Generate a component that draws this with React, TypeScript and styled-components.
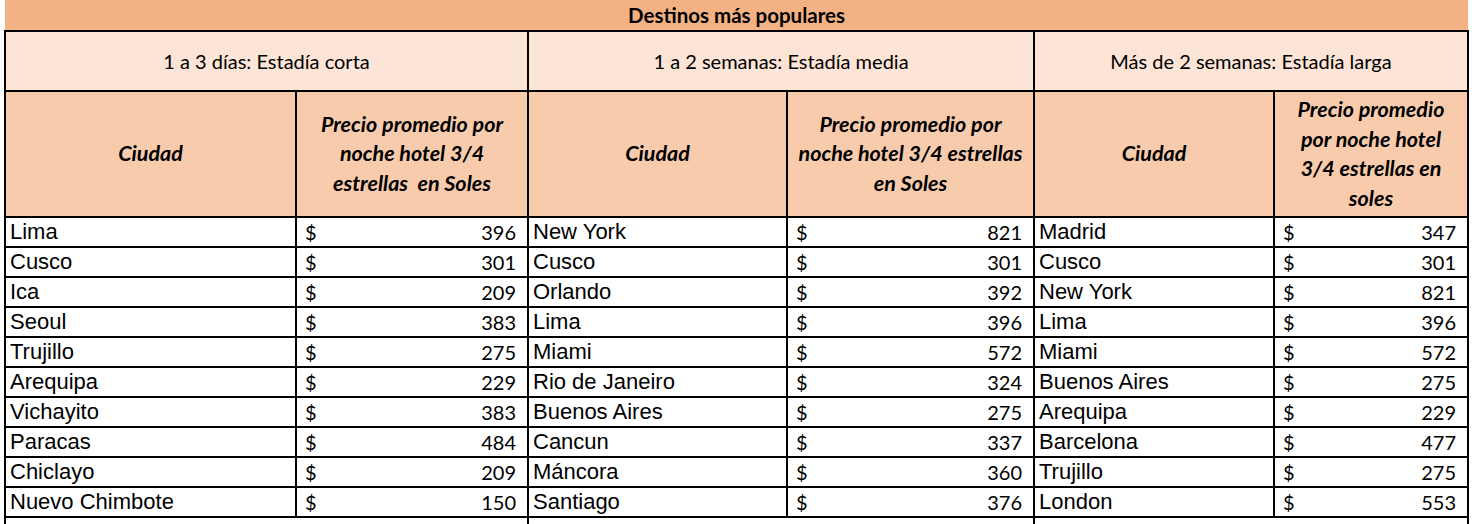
import React from "react";
import styled, { createGlobalStyle } from "styled-components";

const GlobalStyle = createGlobalStyle`
  html, body {
    margin: 0;
    padding: 0;
    background: #ffffff;
  }
`;

const Page = styled.div`
  padding-left: 4px;
  width: 1472px;
  height: 524px;
  overflow: hidden;
  box-sizing: border-box;
`;

const Sheet = styled.table`
  border-collapse: collapse;
  table-layout: fixed;
  width: 1463px;
  color: #000000;
`;

const TitleCell = styled.td`
  height: 30px;
  padding: 0;
  background-color: #f4b183;
  text-align: center;
  font-family: "Lato", "Liberation Sans", sans-serif;
  font-weight: 700;
  font-size: 20.5px;
  border: none;
  border-bottom: 2px solid #000000;
`;

const GroupCell = styled.td`
  height: 58px;
  padding: 0;
  background-color: #fce4d6;
  text-align: center;
  font-family: "Lato", "Liberation Sans", sans-serif;
  font-size: 20px;
  border: 2px solid #000000;
`;

const HeadCell = styled.td`
  height: 124px;
  padding: 0;
  background-color: #f8cbad;
  text-align: center;
  vertical-align: middle;
  font-family: "Lato", "Liberation Sans", sans-serif;
  font-weight: 700;
  font-style: italic;
  font-size: 21.5px;
  line-height: 29.5px;
  white-space: nowrap;
  border: 2px solid #000000;
`;

const CityCell = styled.td`
  height: 28px;
  padding: 0 0 0 4px;
  background-color: #ffffff;
  font-family: "Liberation Sans", Arial, sans-serif;
  font-size: 22px;
  white-space: nowrap;
  border: 2px solid #000000;
`;

const PriceCell = styled.td`
  height: 28px;
  padding: 0 11px 0 8px;
  background-color: #ffffff;
  font-family: "Lato", "Liberation Sans", sans-serif;
  font-size: 20px;
  border: 2px solid #000000;
`;

const PriceBox = styled.div`
  display: flex;
  justify-content: space-between;
  align-items: center;
`;

const TailCell = styled.td`
  height: 20px;
  padding: 0;
  border-left: 2px solid #000000;
  border-right: 2px solid #000000;
  border-top: 2px solid #000000;
`;

type Row = [string, number, string, number, string, number];

const rows: Row[] = [
  ["Lima", 396, "New York", 821, "Madrid", 347],
  ["Cusco", 301, "Cusco", 301, "Cusco", 301],
  ["Ica", 209, "Orlando", 392, "New York", 821],
  ["Seoul", 383, "Lima", 396, "Lima", 396],
  ["Trujillo", 275, "Miami", 572, "Miami", 572],
  ["Arequipa", 229, "Rio de Janeiro", 324, "Buenos Aires", 275],
  ["Vichayito", 383, "Buenos Aires", 275, "Arequipa", 229],
  ["Paracas", 484, "Cancun", 337, "Barcelona", 477],
  ["Chiclayo", 209, "Máncora", 360, "Trujillo", 275],
  ["Nuevo Chimbote", 150, "Santiago", 376, "London", 553],
];

const groups = [
  {
    name: "1 a 3 días: Estadía corta",
    price: ["Precio promedio por", "noche hotel 3/4", "estrellas\u00a0 en Soles"],
  },
  {
    name: "1 a 2 semanas: Estadía media",
    price: ["Precio promedio por", "noche hotel 3/4 estrellas", "en Soles"],
  },
  {
    name: "Más de 2 semanas: Estadía larga",
    price: ["Precio promedio", "por noche hotel", "3/4 estrellas en", "soles"],
  },
];

const Price: React.FC<{ value: number }> = ({ value }) => (
  <PriceCell>
    <PriceBox>
      <span>$</span>
      <span>{value}</span>
    </PriceBox>
  </PriceCell>
);

const App: React.FC = () => {
  return (
    <Page>
      <GlobalStyle />
      <Sheet>
        <colgroup>
          <col style={{ width: 291 }} />
          <col style={{ width: 232 }} />
          <col style={{ width: 259 }} />
          <col style={{ width: 247 }} />
          <col style={{ width: 240 }} />
          <col style={{ width: 194 }} />
        </colgroup>
        <tbody>
          <tr>
            <TitleCell colSpan={6}>Destinos más populares</TitleCell>
          </tr>
          <tr>
            {groups.map((g) => (
              <GroupCell key={g.name} colSpan={2}>
                {g.name}
              </GroupCell>
            ))}
          </tr>
          <tr>
            {groups.map((g) => (
              <React.Fragment key={g.name}>
                <HeadCell>Ciudad</HeadCell>
                <HeadCell>
                  {g.price.map((line, i) => (
                    <div key={i}>{line}</div>
                  ))}
                </HeadCell>
              </React.Fragment>
            ))}
          </tr>
          {rows.map((r, i) => (
            <tr key={i}>
              <CityCell>{r[0]}</CityCell>
              <Price value={r[1]} />
              <CityCell>{r[2]}</CityCell>
              <Price value={r[3]} />
              <CityCell>{r[4]}</CityCell>
              <Price value={r[5]} />
            </tr>
          ))}
          <tr>
            <TailCell colSpan={2} />
            <TailCell colSpan={2} />
            <TailCell colSpan={2} />
          </tr>
        </tbody>
      </Sheet>
    </Page>
  );
};

export default App;
